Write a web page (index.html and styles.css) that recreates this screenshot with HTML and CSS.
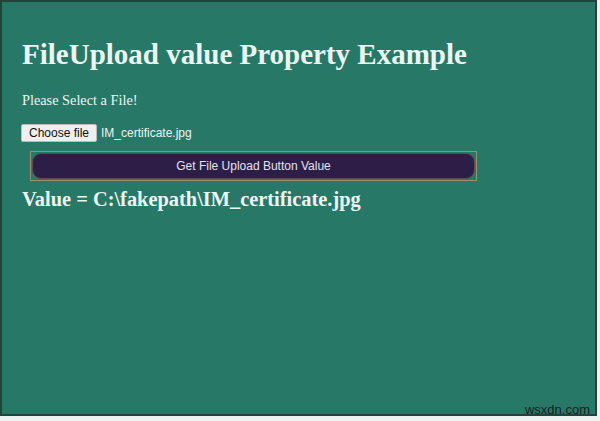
FILE: index.html
```html
<!DOCTYPE html>
<html lang="en">
<head>
<meta charset="utf-8">
<title>FileUpload value Property Example</title>
<link rel="stylesheet" href="styles.css">
</head>
<body>
<div class="frame">
  <h1 class="title">FileUpload value Property Example</h1>
  <p class="prompt">Please Select a File!</p>
  <div class="file-row">
    <span class="choose-btn">Choose file</span>
    <span class="file-name">IM_certificate.jpg</span>
  </div>
  <div class="action-wrap">
    <button class="action-btn" type="button">Get File Upload Button Value</button>
  </div>
  <h2 class="value">Value = C:\fakepath\IM_certificate.jpg</h2>
</div>
<span class="watermark">wsxdn.com</span>
</body>
</html>
```

FILE: styles.css
```css
html, body {
  margin: 0;
  padding: 0;
  background: #eef3f1;
}
body {
  width: 600px;
  height: 421px;
  position: relative;
  overflow: hidden;
}
.frame {
  box-sizing: border-box;
  width: 597px;
  height: 416px;
  border: 2px solid #22433b;
  background: #287867;
  padding: 36px 0 0 20px;
  color: #eaf6f2;
  font-family: "Liberation Serif", "Times New Roman", serif;
}
.title {
  margin: 0;
  font-size: 29px;
  line-height: 33px;
  font-weight: bold;
}
.prompt {
  margin: 21px 0 0;
  font-size: 14.3px;
  line-height: 17px;
}
.file-row {
  margin: 15px 0 0 -1px;
  display: flex;
  align-items: center;
  gap: 4px;
  height: 18px;
  font-family: "Liberation Sans", Arial, sans-serif;
  font-size: 12px;
}
.choose-btn {
  box-sizing: border-box;
  height: 18px;
  width: 76px;
  display: flex;
  align-items: center;
  justify-content: center;
  background: #efefef;
  color: #111;
  border: 1px solid #b9bcbc;
  border-radius: 2px;
}
.file-name {
  color: #eaf4f1;
}
.action-wrap {
  box-sizing: border-box;
  margin: 9px 0 0 8px;
  width: 447px;
  height: 30px;
  border: 1px solid #9a8e70;
  padding: 1px;
}
.action-btn {
  display: block;
  box-sizing: border-box;
  width: 100%;
  height: 100%;
  margin: 0;
  padding: 0;
  background: #2d1e48;
  border: 1px solid #5c4a52;
  border-radius: 9px;
  color: #e4e2ec;
  font-family: "Liberation Sans", Arial, sans-serif;
  font-size: 12px;
  text-align: center;
}
.value {
  margin: 7px 0 0;
  font-size: 20.4px;
  line-height: 23px;
  font-weight: bold;
}
.watermark {
  position: absolute;
  right: 10px;
  top: 403px;
  font-family: "Liberation Sans", Arial, sans-serif;
  font-size: 13px;
  line-height: 14px;
  color: #1c1c1c;
}
```
